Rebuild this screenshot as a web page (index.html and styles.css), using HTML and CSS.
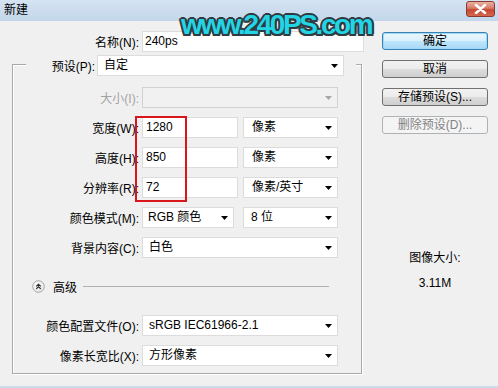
FILE: index.html
```html
<!DOCTYPE html>
<html lang="zh-CN">
<head>
<meta charset="utf-8">
<title>新建</title>
<link rel="stylesheet" href="styles.css">
</head>
<body>
<div class="window">
  <div class="titlebar">
    <span class="title">新建</span>
    <div class="close">
      <svg width="13" height="10" viewBox="0 0 13 10"><path d="M2 1 L11 9 M11 1 L2 9" stroke="#ffffff" stroke-width="2.6" stroke-linecap="round"/></svg>
    </div>
  </div>
  <div class="content">
    <div class="left">
      <div class="row name-row">
        <span class="lbl">名称(N):</span>
        <div class="field name-field">240ps</div>
      </div>
      <div class="group">
        <div class="preset-row">
          <span class="lbl preset-lbl">预设(P):</span>
          <div class="field select preset-select"><span>自定</span><svg class="arrow" width="7" height="4" viewBox="0 0 7 4"><polygon points="0,0 7,0 3.5,4" fill="#000"/></svg></div>
        </div>
        <div class="form">
          <div class="row">
            <span class="lbl grp-lbl disabled-lbl">大小(I):</span>
            <div class="field select disabled-select wide"><span></span><svg class="arrow" width="7" height="4" viewBox="0 0 7 4"><polygon points="0,0 7,0 3.5,4" fill="#a6a6a6"/></svg></div>
          </div>
          <div class="row">
            <span class="lbl grp-lbl">宽度(W):</span>
            <div class="field num">1280</div>
            <div class="field select unit"><span>像素</span><svg class="arrow" width="7" height="4" viewBox="0 0 7 4"><polygon points="0,0 7,0 3.5,4" fill="#000"/></svg></div>
          </div>
          <div class="row">
            <span class="lbl grp-lbl">高度(H):</span>
            <div class="field num">850</div>
            <div class="field select unit"><span>像素</span><svg class="arrow" width="7" height="4" viewBox="0 0 7 4"><polygon points="0,0 7,0 3.5,4" fill="#000"/></svg></div>
          </div>
          <div class="row">
            <span class="lbl grp-lbl">分辨率(R):</span>
            <div class="field num">72</div>
            <div class="field select unit"><span>像素/英寸</span><svg class="arrow" width="7" height="4" viewBox="0 0 7 4"><polygon points="0,0 7,0 3.5,4" fill="#000"/></svg></div>
          </div>
          <div class="row">
            <span class="lbl grp-lbl">颜色模式(M):</span>
            <div class="field select mode"><span>RGB 颜色</span><svg class="arrow" width="7" height="4" viewBox="0 0 7 4"><polygon points="0,0 7,0 3.5,4" fill="#000"/></svg></div>
            <div class="field select unit bits"><span>8 位</span><svg class="arrow" width="7" height="4" viewBox="0 0 7 4"><polygon points="0,0 7,0 3.5,4" fill="#000"/></svg></div>
          </div>
          <div class="row">
            <span class="lbl grp-lbl">背景内容(C):</span>
            <div class="field select wide"><span>白色</span><svg class="arrow" width="7" height="4" viewBox="0 0 7 4"><polygon points="0,0 7,0 3.5,4" fill="#000"/></svg></div>
          </div>
          <div class="advanced">
            <svg class="adv-icon" width="13" height="13" viewBox="0 0 13 13">
              <defs><radialGradient id="g" cx="0.4" cy="0.35" r="0.7"><stop offset="0" stop-color="#ffffff"/><stop offset="1" stop-color="#e2e2e2"/></radialGradient></defs>
              <circle cx="6.5" cy="6.5" r="5.8" fill="url(#g)" stroke="#a8a8a8" stroke-width="1"/>
              <polyline points="4.2,6.4 6.5,4.3 8.8,6.4" fill="none" stroke="#2b2b2b" stroke-width="1.2"/>
              <polyline points="4.2,8.9 6.5,6.8 8.8,8.9" fill="none" stroke="#2b2b2b" stroke-width="1.2"/>
            </svg>
            <span class="adv-text">高级</span>
            <span class="adv-line"></span>
          </div>
          <div class="row profile-row">
            <span class="lbl grp-lbl">颜色配置文件(O):</span>
            <div class="field select wide"><span>sRGB IEC61966-2.1</span><svg class="arrow" width="7" height="4" viewBox="0 0 7 4"><polygon points="0,0 7,0 3.5,4" fill="#000"/></svg></div>
          </div>
          <div class="row">
            <span class="lbl grp-lbl">像素长宽比(X):</span>
            <div class="field select wide"><span>方形像素</span><svg class="arrow" width="7" height="4" viewBox="0 0 7 4"><polygon points="0,0 7,0 3.5,4" fill="#000"/></svg></div>
          </div>
        </div>
      </div>
    </div>
    <div class="right">
      <div class="btn btn-default">确定</div>
      <div class="btn">取消</div>
      <div class="btn">存储预设(S)...</div>
      <div class="btn btn-disabled">删除预设(D)...</div>
      <div class="size-info">
        <div class="size-title">图像大小:</div>
        <div class="size-value">3.11M</div>
      </div>
    </div>
  </div>
  <div class="watermark">www.240PS.com</div>
  <div class="redbox"></div>
</div>
</body>
</html>
```

FILE: styles.css
```css
* { box-sizing: border-box; }
html, body { margin: 0; padding: 0; }
body {
  font-family: "Liberation Sans", "Noto Sans CJK SC", sans-serif;
  font-size: 12px;
  color: #000;
  background: #f0f0f0;
}
.window {
  position: relative;
  width: 498px;
  height: 388px;
  background: #f0f0f0;
  border-bottom: 2px solid #cddbec;
  overflow: hidden;
}
.titlebar {
  height: 21px;
  display: flex;
  justify-content: space-between;
  align-items: flex-start;
  padding: 0 3px 0 4px;
  background: linear-gradient(#d5e3f2, #c3d6eb);
}
.title { line-height: 21px; }
.close {
  margin-top: 1px;
  width: 29px;
  height: 16px;
  border: 1px solid #8d3a2e;
  border-radius: 3px;
  background: linear-gradient(#eab1a4 0%, #d87a66 45%, #c8452f 55%, #d5674f 100%);
  display: flex;
  align-items: center;
  justify-content: center;
}
.content {
  display: flex;
  padding-top: 10px;
}
.left { width: 364px; }
.row {
  display: flex;
  align-items: center;
  height: 21px;
}
.lbl {
  text-align: right;
  white-space: nowrap;
}
.name-row .lbl { width: 139px; margin-right: 3px; }
.field {
  height: 21px;
  background: #fff;
  border: 1px solid #dcdcdc;
  line-height: 19px;
  white-space: nowrap;
}
.name-field { width: 222px; padding-left: 2px; }
.select {
  display: flex;
  align-items: center;
  justify-content: space-between;
  padding: 0 5px 0 6px;
}
.group {
  margin: 12px 0 0 12px;
  width: 350px;
  border: 1px solid #a9a9a9;
  box-shadow: inset 1px 1px 0 #fff, 1px 1px 0 #fff;
  padding-bottom: 7px;
}
.preset-row {
  display: flex;
  align-items: center;
  margin: -10px 0 0 13px;
  width: 330px;
  height: 21px;
  background: #f0f0f0;
}
.preset-lbl { width: 69px; margin-right: 2px; }
.preset-select { width: 247px; }
.form {
  margin-top: 11px;
  display: flex;
  flex-direction: column;
  gap: 9px;
}
.grp-lbl { width: 126px; margin-right: 3px; }
.disabled-lbl { color: #a3a3a3; }
.disabled-select { background: #f1f1f1; border-color: #d2d2d2; }
.wide { width: 196px; }
.num { width: 96px; padding-left: 3px; }
.unit { width: 95px; margin-left: 5px; padding-left: 8px; }
.mode { width: 92px; padding-left: 5px; }
.bits { margin-left: 9px; padding-left: 7px; }
.advanced {
  display: flex;
  align-items: center;
  height: 14px;
  margin: 12px 0 13px 0;
  padding-left: 19px;
}
.adv-text { margin-left: 8px; }
.adv-line {
  flex: 1;
  height: 1px;
  background: #b0b0b0;
  margin: 0 32px 0 6px;
}
.right {
  margin-left: 18px;
  width: 106px;
  padding-top: 1px;
  display: flex;
  flex-direction: column;
  gap: 10px;
}
.btn {
  height: 18px;
  border: 1px solid #707070;
  border-radius: 3px;
  background: linear-gradient(#f2f2f2 0%, #ebebeb 50%, #dddddd 50%, #cfcfcf 100%);
  text-align: center;
  line-height: 16px;
  white-space: nowrap;
}
.btn-default {
  border-color: #3c7fb1;
  background: linear-gradient(#eaf6fd 0%, #d9f0fc 50%, #bee6fd 50%, #a7d9f5 100%);
  box-shadow: inset 0 0 0 1px #9ad9f7;
}
.btn-disabled {
  border-color: #adb2b5;
  background: #f4f4f4;
  color: #838383;
}
.size-info {
  margin-top: 106px;
  text-align: center;
  line-height: 16px;
}
.size-value { margin-top: 9px; }
.watermark {
  position: absolute;
  left: 181px;
  top: 11px;
  font-family: "Liberation Sans", sans-serif;
  font-weight: bold;
  font-size: 28px;
  letter-spacing: -2.4px;
  line-height: 28px;
  color: #22d4e4;
  text-shadow:
    2px 0 0 #2f3b40, -2px 0 0 #2f3b40, 0 2px 0 #2f3b40, 0 -2px 0 #2f3b40,
    1.5px 1.5px 0 #2f3b40, -1.5px 1.5px 0 #2f3b40, 1.5px -1.5px 0 #2f3b40, -1.5px -1.5px 0 #2f3b40;
}
.redbox {
  position: absolute;
  left: 135px;
  top: 116px;
  width: 52px;
  height: 86px;
  border: 2px solid #d8161b;
}
```
